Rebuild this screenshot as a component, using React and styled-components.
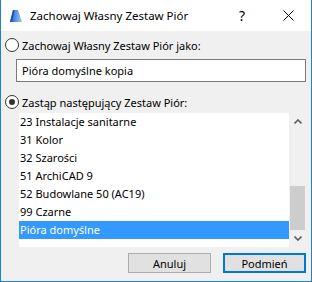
import React from "react";
import styled, { createGlobalStyle } from "styled-components";

const Global = createGlobalStyle`
  html, body {
    margin: 0;
    padding: 0;
    background: #ffffff;
  }
  body {
    font-family: "Noto Sans", "Open Sans", sans-serif;
    font-size: 11px;
    color: #000000;
  }
`;

const Window = styled.div`
  width: 312px;
  height: 282px;
  box-sizing: border-box;
  border: 1px solid #1883d7;
  border-top: none;
  display: flex;
  flex-direction: column;
  background: #f0f0f0;
`;

const TitleBar = styled.div`
  height: 31px;
  flex: none;
  background: #ffffff;
  display: flex;
  align-items: center;
  padding-left: 8px;
  box-sizing: border-box;
`;

const TitleText = styled.div`
  margin-left: 7px;
  font-size: 11.5px;
  color: #000000;
  flex: 1;
`;

const TitleButton = styled.div`
  width: ${p => p.w}px;
  height: 31px;
  display: flex;
  align-items: center;
  justify-content: center;
  font-size: 14px;
  color: #000000;
`;

const Body = styled.div`
  flex: 1;
  display: flex;
  flex-direction: column;
  padding: 7px 5px 0 4px;
`;

const RadioRow = styled.label`
  display: flex;
  align-items: center;
  height: 14px;
  gap: 3px;
  margin-top: ${p => p.mt || 0}px;
`;

const RadioCircle = styled.span`
  width: 12px;
  height: 12px;
  flex: none;
  border: 1px solid #333333;
  border-radius: 50%;
  background: #ffffff;
  display: flex;
  align-items: center;
  justify-content: center;
  &::after {
    content: "";
    width: 6px;
    height: 6px;
    border-radius: 50%;
    background: ${p => (p.checked ? "#333333" : "transparent")};
  }
`;

const TextInput = styled.div`
  margin: 7px 0 0 11px;
  height: 23px;
  box-sizing: border-box;
  border: 1px solid #7a7a7a;
  background: #ffffff;
  display: flex;
  align-items: center;
  padding-left: 5px;
`;

const ListBox = styled.div`
  margin: 4px 0 0 14px;
  height: 134px;
  display: flex;
`;

const Items = styled.div`
  flex: 1;
  background: #ffffff;
`;

const Item = styled.div`
  height: 18px;
  line-height: 18px;
  padding-left: 1px;
  background: ${p => (p.selected ? "#3399ff" : "transparent")};
  color: ${p => (p.selected ? "#ffffff" : "#000000")};
  white-space: nowrap;
`;

const ScrollBar = styled.div`
  width: 17px;
  display: flex;
  flex-direction: column;
  background: #f0f0f0;
`;

const ScrollArrow = styled.div`
  height: 17px;
  display: flex;
  align-items: center;
  justify-content: center;
`;

const Track = styled.div`
  flex: 1;
  display: flex;
  flex-direction: column;
  justify-content: flex-end;
`;

const Thumb = styled.div`
  height: 44px;
  margin: 0 1px;
  background: #cdcdcd;
`;

const Buttons = styled.div`
  display: flex;
  justify-content: flex-end;
  gap: 12px;
  margin-top: 6px;
`;

const Button = styled.div`
  width: 83px;
  height: 20px;
  box-sizing: border-box;
  background: #e1e1e1;
  border: ${p => (p.primary ? "2px solid #0078d7" : "1px solid #adadad")};
  display: flex;
  align-items: center;
  justify-content: center;
  font-size: 11px;
`;

const AppIcon = () => (
  <svg width="14" height="14" viewBox="0 0 14 14">
    <defs>
      <linearGradient id="g1" x1="0" y1="0" x2="1" y2="0">
        <stop offset="0" stopColor="#1e5fc8" />
        <stop offset="1" stopColor="#9ccaf5" />
      </linearGradient>
    </defs>
    <polygon points="1,13 4,1 9,1 13,13" fill="url(#g1)" />
    <polygon points="1,13 4,1 5.5,1 3,13" fill="#1a4fb0" />
  </svg>
);

const Chevron = ({ down }) => (
  <svg width="8" height="5" viewBox="0 0 8 5">
    <polyline
      points={down ? "0.5,0.5 4,4 7.5,0.5" : "0.5,4.5 4,1 7.5,4.5"}
      fill="none"
      stroke="#606060"
      strokeWidth="1.6"
    />
  </svg>
);

const CloseIcon = () => (
  <svg width="11" height="11" viewBox="0 0 11 11">
    <path d="M0.5 0.5 L10.5 10.5 M10.5 0.5 L0.5 10.5" stroke="#000" strokeWidth="1" />
  </svg>
);

const items = [
  "23 Instalacje sanitarne",
  "31 Kolor",
  "32 Szarości",
  "51 ArchiCAD 9",
  "52 Budowlane 50 (AC19)",
  "99 Czarne",
  "Pióra domyślne",
];

export default function App() {
  return (
    <>
      <Global />
      <Window>
        <TitleBar>
          <AppIcon />
          <TitleText>Zachowaj Własny Zestaw Piór</TitleText>
          <TitleButton w={46}>?</TitleButton>
          <TitleButton w={46}>
            <CloseIcon />
          </TitleButton>
        </TitleBar>
        <Body>
          <RadioRow>
            <RadioCircle />
            <span>Zachowaj Własny Zestaw Piór jako:</span>
          </RadioRow>
          <TextInput>Pióra domyślne kopia</TextInput>
          <RadioRow mt={13}>
            <RadioCircle checked />
            <span>Zastąp następujący Zestaw Piór:</span>
          </RadioRow>
          <ListBox>
            <Items>
              {items.map((t, i) => (
                <Item key={t} selected={i === items.length - 1}>
                  {t}
                </Item>
              ))}
            </Items>
            <ScrollBar>
              <ScrollArrow>
                <Chevron />
              </ScrollArrow>
              <Track>
                <Thumb />
              </Track>
              <ScrollArrow>
                <Chevron down />
              </ScrollArrow>
            </ScrollBar>
          </ListBox>
          <Buttons>
            <Button>Anuluj</Button>
            <Button primary>Podmień</Button>
          </Buttons>
        </Body>
      </Window>
    </>
  );
}
